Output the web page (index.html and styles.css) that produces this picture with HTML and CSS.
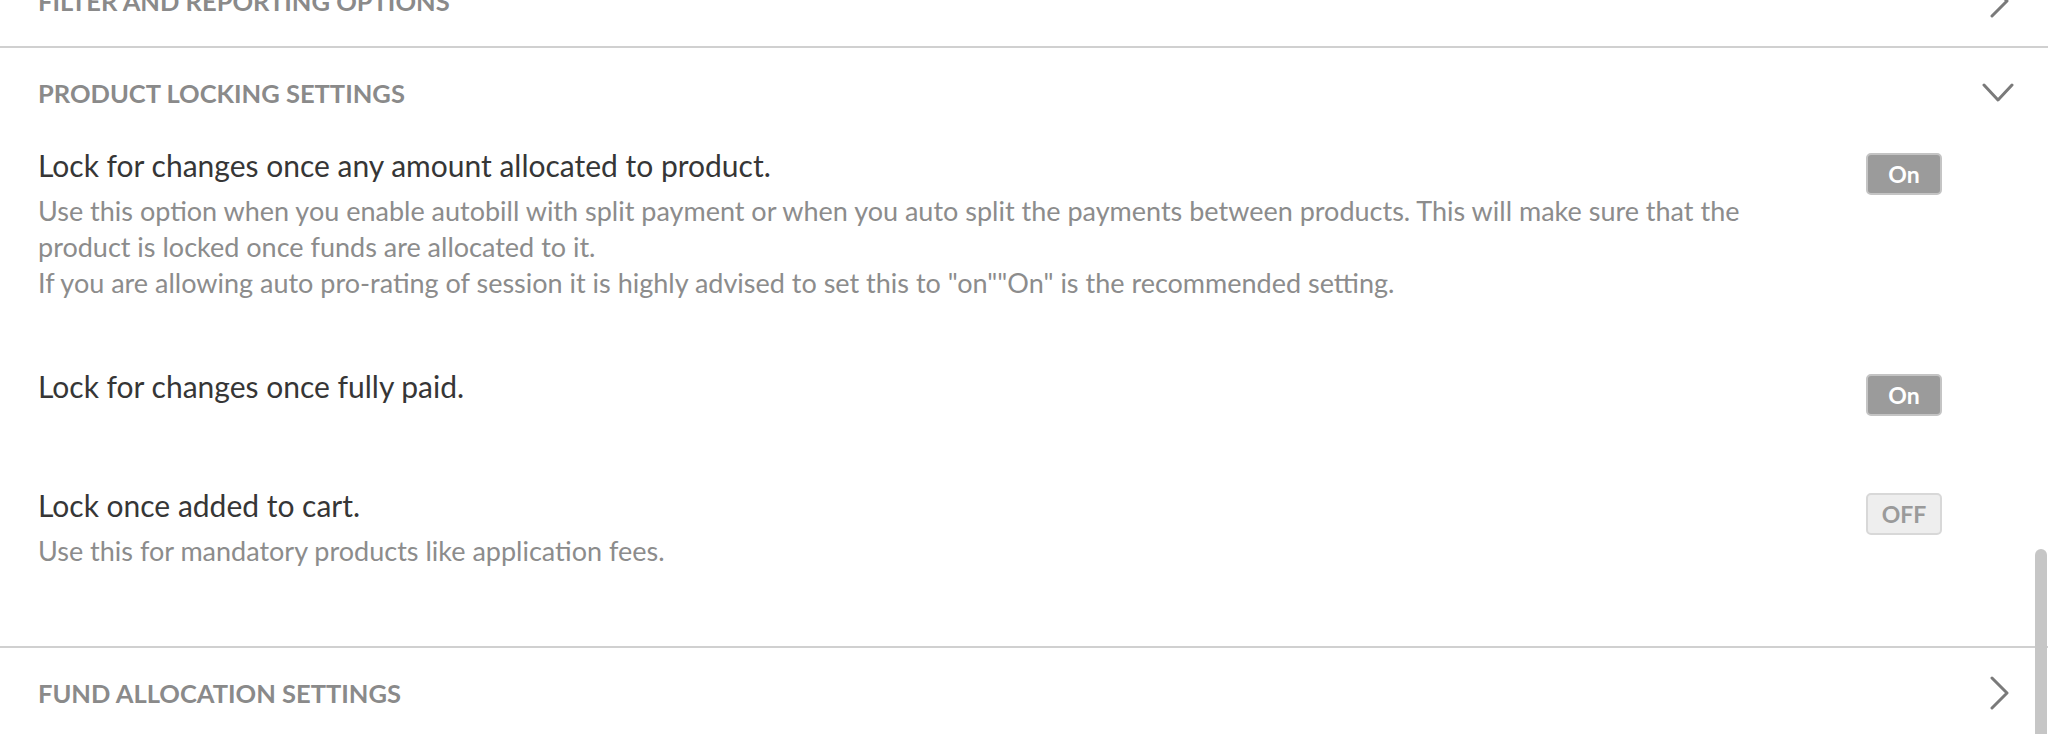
FILE: index.html
```html
<!DOCTYPE html>
<html lang="en">
<head>
<meta charset="utf-8">
<title>Product Settings</title>
<link rel="stylesheet" href="styles.css">
</head>
<body>
<div class="page">
  <section class="panel">
    <div class="panel-head">
      <span class="panel-title">FILTER AND REPORTING OPTIONS</span>
      <span class="chev"><svg class="chev-right" width="20" height="34" viewBox="0 0 20 34"><path d="M2 2 L17 17 L2 32" fill="none" stroke="#7a7a7a" stroke-width="3" stroke-linecap="round" stroke-linejoin="round"/></svg></span>
    </div>
  </section>

  <section class="panel">
    <div class="panel-head">
      <span class="panel-title">PRODUCT LOCKING SETTINGS</span>
      <span class="chev"><svg class="chev-down" width="32" height="20" viewBox="0 0 32 20"><path d="M2 2 L16 17 L30 2" fill="none" stroke="#7a7a7a" stroke-width="3" stroke-linecap="round" stroke-linejoin="round"/></svg></span>
    </div>
    <div class="panel-body">
      <div class="setting">
        <div class="setting-text">
          <div class="setting-title">Lock for changes once any amount allocated to product.</div>
          <div class="setting-desc">Use this option when you enable autobill with split payment or when you auto split the payments between products. This will make sure that the product is locked once funds are allocated to it.<br>If you are allowing auto pro-rating of session it is highly advised to set this to "on""On" is the recommended setting.</div>
        </div>
        <button class="toggle toggle-on">On</button>
      </div>
      <div class="setting setting-compact">
        <div class="setting-text">
          <div class="setting-title">Lock for changes once fully paid.</div>
        </div>
        <button class="toggle toggle-on">On</button>
      </div>
      <div class="setting">
        <div class="setting-text">
          <div class="setting-title">Lock once added to cart.</div>
          <div class="setting-desc">Use this for mandatory products like application fees.</div>
        </div>
        <button class="toggle toggle-off">OFF</button>
      </div>
    </div>
  </section>

  <section class="panel">
    <div class="panel-head">
      <span class="panel-title">FUND ALLOCATION SETTINGS</span>
      <span class="chev"><svg class="chev-right" width="20" height="34" viewBox="0 0 20 34"><path d="M2 2 L17 17 L2 32" fill="none" stroke="#7a7a7a" stroke-width="3" stroke-linecap="round" stroke-linejoin="round"/></svg></span>
    </div>
  </section>
</div>
<div class="scroll-thumb"></div>
</body>
</html>
```

FILE: styles.css
```css
html, body {
  margin: 0;
  padding: 0;
  background: #ffffff;
  overflow: hidden;
}

body {
  font-family: Lato, "Liberation Sans", sans-serif;
  width: 2048px;
  height: 734px;
  position: relative;
}

.page {
  margin-top: -44px;
}

.panel {
  border-bottom: 2px solid #d0d0d0;
}

.panel-head {
  height: 90px;
  display: flex;
  align-items: center;
  justify-content: space-between;
  padding: 0 34px 0 38px;
}

.panel-title {
  font-size: 25.5px;
  font-weight: 700;
  color: #8a8a8a;
}

.chev {
  width: 32px;
  height: 34px;
  display: flex;
  align-items: center;
  justify-content: center;
}

.chev-right {
  margin-left: 4px;
}

.panel-body {
  padding: 9px 0 10px;
}

.setting {
  display: flex;
  align-items: flex-start;
  padding: 0 106px 67px 38px;
}

.setting-compact {
  padding-bottom: 71px;
}

.setting-text {
  flex: 0 1 1760px;
}

.setting-title {
  font-size: 30px;
  line-height: 36px;
  color: #363636;
}

.setting-desc {
  margin-top: 10px;
  font-size: 27px;
  line-height: 36px;
  color: #8c8c8c;
}

.toggle {
  margin-left: auto;
  margin-top: 6px;
  width: 76px;
  height: 42px;
  box-sizing: border-box;
  border-radius: 5px;
  border: 2px solid #cfcfcf;
  font-family: Lato, "Liberation Sans", sans-serif;
  font-weight: 700;
  font-size: 23px;
  padding: 0;
  display: flex;
  align-items: center;
  justify-content: center;
}

.toggle-on {
  background: #9b9b9b;
  color: #ffffff;
  border-color: #c4c4c4;
}

.toggle-off {
  background: #eeeeee;
  color: #9a9a9a;
  border-color: #d8d8d8;
}

.scroll-thumb {
  position: absolute;
  left: 2035px;
  top: 549px;
  width: 12px;
  height: 200px;
  border-radius: 6px;
  background: #c6c6c6;
}
```
